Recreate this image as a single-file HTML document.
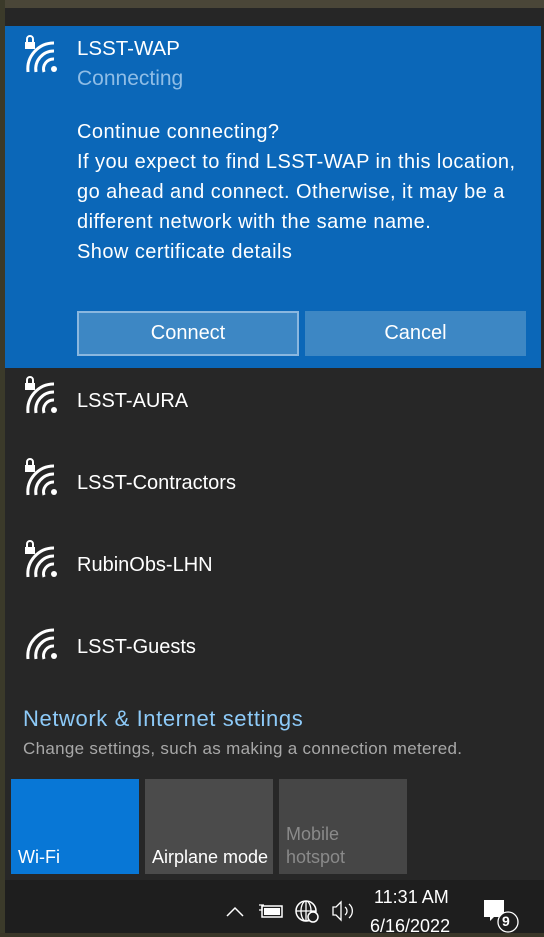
<!DOCTYPE html>
<html><head><meta charset="utf-8"><style>
*{margin:0;padding:0;box-sizing:border-box}
body{width:544px;height:933px;overflow:hidden;background:#3a3628;font-family:"Liberation Sans",sans-serif;position:relative}
.abs{position:absolute}
#top{left:0;top:0;width:544px;height:26px;background:#4a4638}
#top2{left:5px;top:8px;width:539px;height:18px;background:#262626}
#left{left:0;top:0;width:5px;height:933px;background:#3b3a2a}
#panel{left:5px;top:26px;width:539px;height:854px;background:#272727}
#blue{left:5px;top:26px;width:536px;height:342px;background:#0b67b8}
.t{color:#fff;font-size:20px;position:absolute;white-space:nowrap}
.btn{position:absolute;top:311px;height:45px;background:#3d87c4;color:#fff;font-size:20px;text-align:center;line-height:45px}
.tile{position:absolute;top:779px;height:95px;width:128px;font-size:18px;color:#fff}
#tb{left:0;top:880px;width:544px;height:53px;background:#1e1e1e}
</style></head><body>
<div class="abs" id="top"></div><div class="abs" id="top2"></div><div class="abs" id="left"></div>
<div class="abs" id="panel"></div>
<div class="abs" id="blue"></div>
<svg class="abs" style="left:0;top:0" width="544" height="933">
<g fill="none" stroke="#fff" stroke-width="3">
<g id="w1">
<circle cx="54" cy="69" r="3" fill="#fff" stroke="none"/>
<path d="M44 72 A10 10 0 0 1 54 59"/>
<path d="M36 72 A18 18 0 0 1 54 51"/>
<path d="M28 72 A26 26 0 0 1 54 43"/>
<rect x="25" y="42" width="10" height="7" fill="#fff" stroke="none"/>
<path d="M27 42 v-3 a3 3 0 0 1 6 0 v3" stroke-width="2"/>
</g>
<use href="#w1" transform="translate(0,341)"/>
<use href="#w1" transform="translate(0,423)"/>
<use href="#w1" transform="translate(0,505)"/>
<g transform="translate(0,587)">
<circle cx="54" cy="69" r="3" fill="#fff" stroke="none"/>
<path d="M44 72 A10 10 0 0 1 54 59"/>
<path d="M36 72 A18 18 0 0 1 54 51"/>
<path d="M28 72 A26 26 0 0 1 54 43"/>
</g>
<g stroke-width="1.8">
<circle cx="36" cy="812" r="2" fill="#fff" stroke="none"/>
<path d="M29 814 A7 7 0 0 1 36 806"/>
<path d="M24 814 A12 12 0 0 1 36 801"/>
<path d="M20 814 A16 16 0 0 1 36 797"/>
</g>
<path d="M160 796 l6 7 h-8 l-3 -3 v7 l3 -3 h8 l-6 7 M166 803 h8 a1.5 1.5 0 0 1 0 3 h-8" stroke-width="1.5"/>
<g stroke="#aaa" stroke-width="1.5"><path d="M297 802 v12"/><path d="M293 798 a6 6 0 0 0 0 8 M301 798 a6 6 0 0 1 0 8 M289 795 a10 10 0 0 0 0 14 M305 795 a10 10 0 0 1 0 14"/></g>
<path d="M227 916 l8 -8 l8 8" stroke-width="1.5"/>
<path d="M259 905 h5 M262 905 v5 h-3" stroke-width="1.3"/>
<rect x="262" y="906" width="20" height="11" stroke-width="1.5"/><rect x="264" y="908" width="16" height="7" fill="#fff" stroke="none"/>
<circle cx="306" cy="911" r="10" stroke-width="1.5"/><path d="M296 911 h20 M306 901 v20 M306 901 a5 10 0 0 0 0 20 a5 10 0 0 0 0 -20" stroke-width="1.3"/>
<circle cx="313" cy="917" r="5" fill="#1e1e1e" stroke-width="1.5"/>
<path d="M333 907 h3 l5 -5 v18 l-5 -5 h-3 z M345 907 a5 5 0 0 1 0 8 M349 904 a9 9 0 0 1 0 14" stroke-width="1.3"/>
<path d="M484 900 h20 v17 h-10 l-4 4 v-4 h-6 z" fill="#fff" stroke="none"/>
<circle cx="508" cy="922" r="10" fill="#1e1e1e" stroke="#fff" stroke-width="1.3"/>
</g>
</svg>
<div class="t" style="left:77px;top:37px;font-size:20.5px">LSST-WAP</div>
<div class="t" style="left:77px;top:67px;color:#8fbde6;font-size:21px">Connecting</div>
<div class="t" style="left:77px;top:117px;line-height:30px;font-size:20px;letter-spacing:0.45px">Continue connecting?<br>If you expect to find LSST-WAP in this location,<br>go ahead and connect. Otherwise, it may be a<br>different network with the same name.<br>Show certificate details</div>
<div class="btn" style="left:77px;width:222px;border:2px solid #8ab7df;line-height:41px">Connect</div>
<div class="btn" style="left:305px;width:221px">Cancel</div>
<div class="t" style="left:77px;top:390px">LSST-AURA</div>
<div class="t" style="left:77px;top:472px">LSST-Contractors</div>
<div class="t" style="left:77px;top:554px">RubinObs-LHN</div>
<div class="t" style="left:77px;top:636px">LSST-Guests</div>
<div class="t" style="left:23px;top:706px;color:#8dcaf8;font-size:22px;letter-spacing:0.6px">Network &amp; Internet settings</div>
<div class="t" style="left:23px;top:739px;color:#a8a8a8;font-size:17px;letter-spacing:0.3px">Change settings, such as making a connection metered.</div>
<div class="tile" style="left:11px;background:#0877d6"><span class="abs" style="left:7px;top:68px">Wi-Fi</span></div>
<div class="tile" style="left:145px;background:#4b4b4b"><span class="abs" style="left:7px;top:68px">Airplane mode</span></div>
<div class="tile" style="left:279px;background:#464646;color:#8a8a8a"><span class="abs" style="left:7px;top:44px;line-height:23px">Mobile<br>hotspot</span></div>
<div class="abs" id="tb" style="z-index:-1"></div>
<div class="t" style="left:374px;top:887px;font-size:18px">11:31 AM</div>
<div class="t" style="left:370px;top:916px;font-size:18px">6/16/2022</div>
<div class="t" style="left:502px;top:913px;font-size:14px;font-weight:bold">9</div>
</body></html>
